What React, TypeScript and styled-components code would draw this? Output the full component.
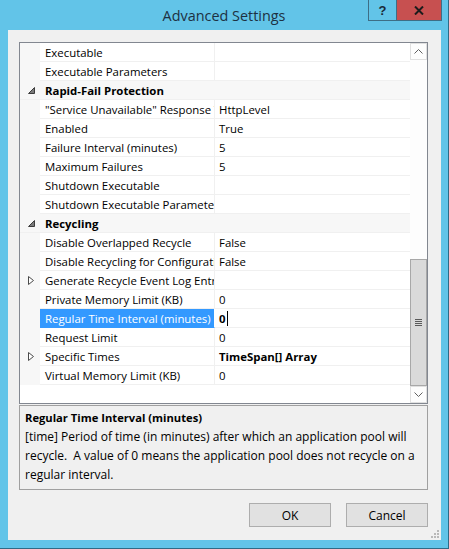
import React from "react";
import styled, { createGlobalStyle } from "styled-components";

const GlobalStyle = createGlobalStyle`
  * { box-sizing: border-box; }
  html, body { margin: 0; padding: 0; }
  body {
    background: #62c4e8;
    font-family: "Open Sans", "Noto Sans", sans-serif;
    font-size: 12px;
    color: #000;
  }
`;

type Row =
  | { kind: "category"; label: string }
  | {
      kind: "prop";
      label: string;
      value?: string;
      bold?: boolean;
      expandable?: boolean;
      selected?: boolean;
    };

const rows: Row[] = [
  { kind: "prop", label: "Executable" },
  { kind: "prop", label: "Executable Parameters" },
  { kind: "category", label: "Rapid-Fail Protection" },
  { kind: "prop", label: "\"Service Unavailable\" Response Type", value: "HttpLevel" },
  { kind: "prop", label: "Enabled", value: "True" },
  { kind: "prop", label: "Failure Interval (minutes)", value: "5" },
  { kind: "prop", label: "Maximum Failures", value: "5" },
  { kind: "prop", label: "Shutdown Executable" },
  { kind: "prop", label: "Shutdown Executable Parameters" },
  { kind: "category", label: "Recycling" },
  { kind: "prop", label: "Disable Overlapped Recycle", value: "False" },
  { kind: "prop", label: "Disable Recycling for Configuration Changes", value: "False" },
  { kind: "prop", label: "Generate Recycle Event Log Entry", expandable: true },
  { kind: "prop", label: "Private Memory Limit (KB)", value: "0" },
  { kind: "prop", label: "Regular Time Interval (minutes)", value: "0", selected: true },
  { kind: "prop", label: "Request Limit", value: "0" },
  { kind: "prop", label: "Specific Times", value: "TimeSpan[] Array", bold: true, expandable: true },
  { kind: "prop", label: "Virtual Memory Limit (KB)", value: "0" },
];

function App() {
  return (
    <>
      <GlobalStyle />
      <Window>
        <TitleBar>
          <span />
          <Title>Advanced Settings</Title>
          <Caption>
            <HelpButton>?</HelpButton>
            <CloseButton>
              <svg width="10" height="9" viewBox="0 0 10 9">
                <path d="M1 0.5 L9 8.5 M9 0.5 L1 8.5" stroke="#1c1c1c" strokeWidth="2" />
              </svg>
            </CloseButton>
          </Caption>
        </TitleBar>

        <Client>
          <Grid>
            <RowsArea>
              {rows.map((row, i) =>
                row.kind === "category" ? (
                  <CategoryRow key={i}>
                    <Margin>
                      <svg width="7" height="7" viewBox="0 0 7 7">
                        <polygon points="6.5,0.5 6.5,6.5 0.5,6.5" fill="#7a7a7a" stroke="#3c3c3c" strokeWidth="1" />
                      </svg>
                    </Margin>
                    <CategoryLabel>{row.label}</CategoryLabel>
                  </CategoryRow>
                ) : (
                  <PropRow key={i}>
                    <Margin>
                      {row.expandable && (
                        <svg width="6" height="9" viewBox="0 0 6 9">
                          <polygon points="0.5,0.5 5.5,4.5 0.5,8.5" fill="#fff" stroke="#4a4a4a" strokeWidth="1" />
                        </svg>
                      )}
                    </Margin>
                    <NameCell $selected={row.selected}>{row.label}</NameCell>
                    <ValueCell $bold={row.bold || row.selected}>
                      {row.value}
                      {row.selected && <Caret />}
                    </ValueCell>
                  </PropRow>
                )
              )}
            </RowsArea>
            <ScrollBar>
              <ArrowBox>
                <svg width="9" height="5" viewBox="0 0 9 5">
                  <path d="M0.5 4.5 L4.5 0.5 L8.5 4.5" fill="none" stroke="#606060" />
                </svg>
              </ArrowBox>
              <Track>
                <Thumb>
                  <Grip>
                    <span />
                    <span />
                    <span />
                    <span />
                  </Grip>
                </Thumb>
              </Track>
              <ArrowBox>
                <svg width="9" height="5" viewBox="0 0 9 5">
                  <path d="M0.5 0.5 L4.5 4.5 L8.5 0.5" fill="none" stroke="#606060" />
                </svg>
              </ArrowBox>
            </ScrollBar>
          </Grid>

          <HelpPanel>
            <HelpTitle>Regular Time Interval (minutes)</HelpTitle>
            <HelpLine>[time] Period of time (in minutes) after which an application pool will</HelpLine>
            <HelpLine>recycle.  A value of 0 means the application pool does not recycle on a</HelpLine>
            <HelpLine>regular interval.</HelpLine>
          </HelpPanel>

          <Footer>
            <Button>OK</Button>
            <Button>Cancel</Button>
          </Footer>

          <SizeGrip>
            <svg width="8" height="8" viewBox="0 0 8 8" fill="#b8b8b8">
              <rect x="6" y="0" width="2" height="2" />
              <rect x="3" y="3" width="2" height="2" />
              <rect x="6" y="3" width="2" height="2" />
              <rect x="0" y="6" width="2" height="2" />
              <rect x="3" y="6" width="2" height="2" />
              <rect x="6" y="6" width="2" height="2" />
            </svg>
          </SizeGrip>
        </Client>
      </Window>
    </>
  );
}

export default App;

const Window = styled.div`
  width: 449px;
  height: 549px;
  background: #62c4e8;
  border-right: 1px solid #2f6b86;
  border-bottom: 1px solid #2f6b86;
  display: flex;
  flex-direction: column;
`;

const TitleBar = styled.div`
  height: 30px;
  display: grid;
  grid-template-columns: 1fr auto 1fr;
  align-items: center;
`;

const Title = styled.div`
  font-size: 14.4px;
  color: #1d3142;
  padding-top: 1px;
`;

const Caption = styled.div`
  justify-self: end;
  align-self: start;
  margin-right: 6px;
  display: flex;
  border: 1px solid #3d6e86;
  border-top: none;
`;

const HelpButton = styled.div`
  width: 28px;
  height: 20px;
  display: flex;
  align-items: center;
  justify-content: center;
  font-family: "Liberation Sans", sans-serif;
  font-weight: bold;
  font-size: 13px;
  color: #1a2a3a;
  border-right: 1px solid #3d6e86;
`;

const CloseButton = styled.div`
  width: 44px;
  height: 20px;
  display: flex;
  align-items: center;
  justify-content: center;
  background: #c75050;
`;

const Client = styled.div`
  position: relative;
  flex: 1;
  margin: 0 7px 8px 8px;
  background: #f0f0f0;
  padding: 12px 13px 0 11px;
  display: flex;
  flex-direction: column;
`;

const Grid = styled.div`
  height: 362px;
  border: 1px solid #828790;
  background: #fff;
  display: flex;
  font-size: 11.4px;
`;

const RowsArea = styled.div`
  flex: 1;
  display: flex;
  flex-direction: column;
  overflow: hidden;
`;

const Margin = styled.div`
  width: 20px;
  flex: none;
  background: #f7f7f7;
  display: flex;
  align-items: center;
  justify-content: center;
  padding-left: 2px;
`;

const CategoryRow = styled.div`
  height: 19px;
  display: flex;
  background: #f7f7f7;
  border-bottom: 1px solid #f0f0f0;
`;

const CategoryLabel = styled.div`
  padding-left: 5px;
  padding-top: 1px;
  font-weight: bold;
  line-height: 18px;
  white-space: nowrap;
`;

const PropRow = styled.div`
  height: 19px;
  display: flex;
`;

const NameCell = styled.div<{ $selected?: boolean }>`
  width: 175px;
  flex: none;
  padding-left: 5px;
  padding-top: 1px;
  line-height: 18px;
  white-space: nowrap;
  overflow: hidden;
  border-bottom: 1px solid ${(p) => (p.$selected ? "#3399ff" : "#f0f0f0")};
  border-right: 1px solid ${(p) => (p.$selected ? "#fff" : "#f0f0f0")};
  background: ${(p) => (p.$selected ? "#3399ff" : "#fff")};
  color: ${(p) => (p.$selected ? "#fff" : "#000")};
`;

const ValueCell = styled.div<{ $bold?: boolean }>`
  flex: 1;
  padding-left: 4px;
  padding-top: 1px;
  line-height: 18px;
  white-space: nowrap;
  overflow: hidden;
  font-weight: ${(p) => (p.$bold ? "bold" : "normal")};
  border-bottom: 1px solid #f0f0f0;
  display: flex;
  align-items: center;
`;

const Caret = styled.span`
  width: 1px;
  height: 15px;
  background: #000;
  margin-left: 1px;
`;

const ScrollBar = styled.div`
  width: 17px;
  flex: none;
  display: flex;
  flex-direction: column;
  background: #fdfdfd;
`;

const ArrowBox = styled.div`
  height: 17px;
  flex: none;
  display: flex;
  align-items: center;
  justify-content: center;
  background: #fdfdfd;
  border: 1px solid #e0e0e0;
`;

const Track = styled.div`
  flex: 1;
  display: flex;
  flex-direction: column;
  justify-content: flex-end;
  background: #fdfdfd;
`;

const Thumb = styled.div`
  height: 127px;
  background: #dadada;
  border: 1px solid #a8a8a8;
  display: flex;
  align-items: center;
  justify-content: center;
`;

const Grip = styled.div`
  display: flex;
  flex-direction: column;
  gap: 1px;
  span {
    display: block;
    width: 7px;
    height: 1px;
    background: #5a5a5a;
  }
`;

const HelpPanel = styled.div`
  margin-top: 1px;
  height: 85px;
  border: 1px solid #a0a0a0;
  background: #f0f0f0;
  padding: 2px 6px 0 5px;
  line-height: 19px;
`;

const HelpTitle = styled.div`
  font-weight: bold;
  font-size: 11.2px;
`;

const HelpLine = styled.div`
  white-space: pre;
`;

const Footer = styled.div`
  margin-top: 13px;
  display: flex;
  justify-content: flex-end;
  gap: 15px;
`;

const Button = styled.div`
  width: 82px;
  height: 24px;
  background: #e1e1e1;
  border: 1px solid #adadad;
  display: flex;
  align-items: center;
  justify-content: center;
`;

const SizeGrip = styled.div`
  position: absolute;
  right: 2px;
  bottom: 2px;
  display: flex;
`;
